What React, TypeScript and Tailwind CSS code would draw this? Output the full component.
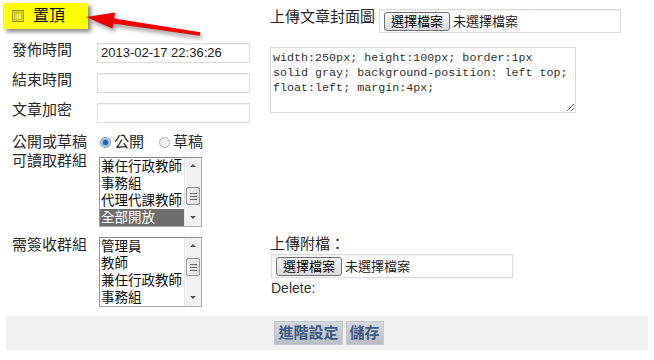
import type { ReactNode } from "react";

const groups1 = ["兼任行政教師", "事務組", "代理代課教師", "全部開放"];
const groups2 = ["管理員", "教師", "兼任行政教師", "事務組"];

function FileBox({ className = "" }: { className?: string }) {
  return (
    <div
      className={`w-[242px] h-[24px] border border-[#dcdcdc] shadow-[inset_0_1px_1px_rgba(0,0,0,0.06)] flex items-center pl-[4px] gap-[3px] ${className}`}
    >
      <span className="h-[19px] px-[6px] border border-[#707070] rounded-[3px] bg-gradient-to-b from-[#f7f7f7] to-[#dcdcdc] text-[13px] leading-[17px] text-black">
        選擇檔案
      </span>
      <span className="text-[13px] leading-[17px] text-[#222]">未選擇檔案</span>
    </div>
  );
}

function ListBox({ items, selected, thumbTop }: { items: string[]; selected?: number; thumbTop: number }) {
  return (
    <div className="w-[103px] h-[70px] border border-[#a8a8a8] border-t-[#8a8a8a] border-l-[#9a9a9a] flex overflow-hidden bg-white">
      <div className="flex-1">
        {items.map((it, i) => (
          <div
            key={it}
            className={`h-[17px] pl-[1px] text-[13.5px] leading-[17px] whitespace-nowrap ${
              i === selected ? "bg-[#6e6e6e] text-white" : "text-[#111]"
            }`}
          >
            {it}
          </div>
        ))}
      </div>
      <div className="w-[17px] bg-[#f2f2f2] border-l border-[#e6e6e6] relative">
        <div className="absolute left-[5px] top-[6px] w-0 h-0 border-l-[3px] border-r-[3px] border-b-[3px] border-l-transparent border-r-transparent border-b-[#555]" />
        <div
          className="absolute left-[1px] w-[14px] h-[18px] border border-[#9a9a9a] rounded-[2px] bg-gradient-to-r from-[#f4f4f4] to-[#e2e2e2] flex flex-col items-center justify-center gap-[2px]"
          style={{ top: thumbTop }}
        >
          <div className="w-[7px] h-px bg-[#666]" />
          <div className="w-[7px] h-px bg-[#666]" />
          <div className="w-[7px] h-px bg-[#666]" />
        </div>
        <div className="absolute left-[5px] bottom-[7px] w-0 h-0 border-l-[3px] border-r-[3px] border-t-[3px] border-l-transparent border-r-transparent border-t-[#555]" />
      </div>
    </div>
  );
}

function Row({ label, children, className = "" }: { label: string; children?: ReactNode; className?: string }) {
  return (
    <div className={`flex ${className}`}>
      <div className="w-[97px] shrink-0 pl-[12px] text-[15px] leading-[20px] whitespace-nowrap">{label}</div>
      {children}
    </div>
  );
}

function TextBox({ value = "" }: { value?: string }) {
  return (
    <div className="mt-[3px] w-[153px] h-[20px] border border-[#dcdcdc] shadow-[inset_0_1px_1px_rgba(0,0,0,0.06)] pl-[3px] text-[13px] leading-[18px] text-[#222]">
      {value}
    </div>
  );
}

export default function App() {
  return (
    <div className="relative w-[654px] h-[360px] bg-white text-[#2a2a2a] font-['Liberation_Sans','Noto_Sans_CJK_TC',sans-serif] overflow-hidden">
      <div className="flex">
        {/* left column */}
        <div className="w-[270px] shrink-0">
          <div className="mt-[3px] ml-[3px] w-[85px] h-[26px] bg-[#ffff00] shadow-[3px_3px_4px_rgba(0,0,0,0.45)] flex items-center pl-[9px] gap-[9px]">
            <div className="w-[12px] h-[12px] border border-[#8f8f4a] bg-[#e4e400] flex items-center justify-center">
              <div className="w-[8px] h-[8px] border border-[#c4c400] bg-gradient-to-br from-[#d0d000] to-[#f4f470]" />
            </div>
            <span className="text-[16px] leading-[20px] text-[#111]">置頂</span>
          </div>

          <div className="mt-[11px]">
            <Row label="發佈時間" className="h-[30px]">
              <TextBox value="2013-02-17 22:36:26" />
            </Row>
            <Row label="結束時間" className="h-[30px]">
              <TextBox />
            </Row>
            <Row label="文章加密" className="h-[32px]">
              <TextBox />
            </Row>
            <Row label="公開或草稿" className="h-[19px]">
              <div className="flex items-center h-[20px] pl-[3px] text-[15px] leading-[20px]">
                <span className="w-[11px] h-[11px] rounded-full border border-[#7b8a9a] bg-[#dfe6ee] flex items-center justify-center">
                  <span className="w-[5px] h-[5px] rounded-full bg-[#1f5fb4] shadow-[0_0_1px_1px_#6fa0dc]" />
                </span>
                <span className="ml-[3px]">公開</span>
                <span className="ml-[15px] w-[11px] h-[11px] rounded-full border border-[#b0b0b0] bg-gradient-to-br from-[#e8e8e8] to-[#fafafa]" />
                <span className="ml-[3px]">草稿</span>
              </div>
            </Row>
            <Row label="可讀取群組">
              <div className="mt-[6px] ml-[2px]">
                <ListBox items={groups1} selected={3} thumbTop={29} />
              </div>
            </Row>
            <Row label="需簽收群組" className="mt-[8px]">
              <div className="mt-[2px] ml-[2px]">
                <ListBox items={groups2} thumbTop={20} />
              </div>
            </Row>
          </div>
        </div>

        {/* right column */}
        <div className="flex-1">
          <div className="mt-[7px] flex items-start">
            <span className="text-[15px] leading-[20px] whitespace-nowrap">上傳文章封面圖</span>
            <FileBox className="mt-[2px] ml-[4px]" />
          </div>
          <textarea
            readOnly
            className="mt-[14px] block w-[306px] h-[66px] border border-[#d8d8d8] px-[2px] py-[3px] text-[11.7px] leading-[15px] text-[#333] font-['Liberation_Mono',monospace] resize-y outline-none"
            defaultValue={"width:250px; height:100px; border:1px\nsolid gray; background-position: left top;\nfloat:left; margin:4px;"}
          />
          <div className="mt-[121px] text-[15px] leading-[20px]">上傳附檔：</div>
          <FileBox className="ml-[1px]" />
          <div className="mt-[1px] ml-[1px] text-[14px] leading-[18px] text-[#333]">Delete:</div>
        </div>
      </div>

      {/* bottom bar */}
      <div className="mt-[9px] mx-[6px] h-[34px] bg-[#f1f1f1] flex items-center justify-center gap-[3px] pl-[4px]">
        <button className="h-[24px] px-[3px] border border-[#c5c8ce] bg-gradient-to-b from-[#d6d9de] to-[#babec6] text-[15px] leading-[20px] font-bold text-[#3f5a82]">
          進階設定
        </button>
        <button className="h-[24px] px-[3px] border border-[#c5c8ce] bg-gradient-to-b from-[#d6d9de] to-[#babec6] text-[15px] leading-[20px] font-bold text-[#3f5a82]">
          儲存
        </button>
      </div>

      {/* red arrow annotation */}
      <svg
        className="absolute left-0 top-0 pointer-events-none drop-shadow-[2px_3px_2px_rgba(0,0,0,0.4)]"
        width="654"
        height="60"
        viewBox="0 0 654 60"
      >
        <polygon
          points="86,17 115,12.5 114.2,18.6 200.3,32.2 199.7,35.8 113.4,23.6 112.5,28.5"
          fill="#f00000"
        />
      </svg>
    </div>
  );
}
